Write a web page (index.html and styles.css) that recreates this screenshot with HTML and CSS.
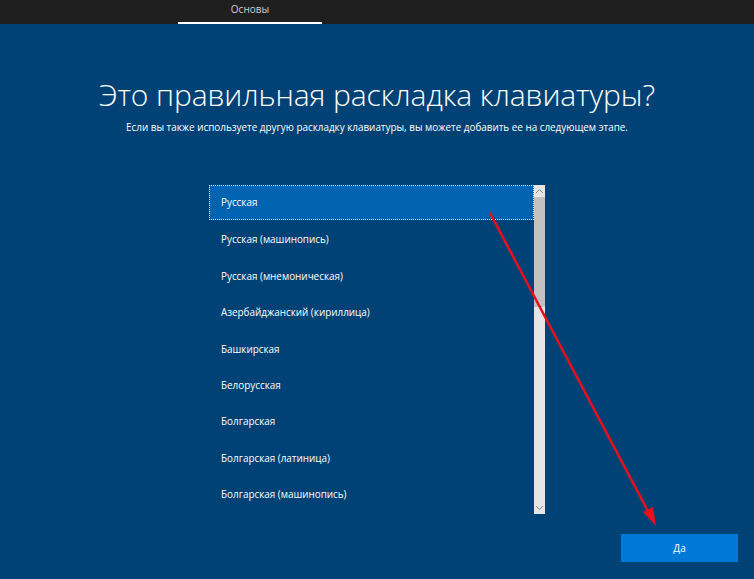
FILE: index.html
```html
<!DOCTYPE html>
<html lang="ru">
<head>
    <meta charset="UTF-8">
    <title>Основы</title>
    <link rel="stylesheet" href="styles.css">
</head>
<body>
    <!-- Top bar with steps -->
    <div class="topbar">
        <div class="tab active">Основы</div>
    </div>

    <div class="page">
        <h1>Это правильная раскладка клавиатуры?</h1>
        <p class="hint">Если вы также используете другую раскладку клавиатуры, вы можете добавить ее на следующем этапе.</p>

        <div class="layoutList">
            <div class="items">
                <div class="item selected">Русская</div>
                <div class="item">Русская (машинопись)</div>
                <div class="item">Русская (мнемоническая)</div>
                <div class="item">Азербайджанский (кириллица)</div>
                <div class="item">Башкирская</div>
                <div class="item">Белорусская</div>
                <div class="item">Болгарская</div>
                <div class="item">Болгарская (латиница)</div>
                <div class="item">Болгарская (машинопись)</div>
            </div>
            <div class="scrollbar">
                <div class="arrow up">
                    <svg width="9" height="6" viewBox="0 0 9 6"><path d="M1 5 L4.5 1.5 L8 5" fill="none" stroke="#8a8a8a" stroke-width="1"/></svg>
                </div>
                <div class="thumb"></div>
                <div class="track"></div>
                <div class="arrow down">
                    <svg width="9" height="6" viewBox="0 0 9 6"><path d="M1 1 L4.5 4.5 L8 1" fill="none" stroke="#8a8a8a" stroke-width="1"/></svg>
                </div>
            </div>
        </div>
    </div>

    <div class="footer">
        <div class="button">Да</div>
    </div>

    <!-- red annotation arrow -->
    <svg class="annotation" width="754" height="579" viewBox="0 0 754 579">
        <line x1="490" y1="213" x2="649" y2="513" stroke="#e8101c" stroke-width="2.5" stroke-linecap="round"/>
        <polygon points="656,526 643,512 653,507" fill="#e8101c"/>
    </svg>
</body>
</html>
```

FILE: styles.css
```css
body, html {
    margin: 0;
    padding: 0;
    width: 100%;
    height: 100%;
    background-color: #004275; /* OOBE blue */
    color: #ffffff;
    font-family: "Open Sans", "Noto Sans", sans-serif;
    overflow: hidden;
}

body {
    display: flex;
    flex-direction: column;
    position: relative;
}

.topbar {
    height: 24px;
    background-color: #1f1f1f;
    display: flex;
    padding-left: 178px;
}

.tab {
    width: 144px;
    text-align: center;
    font-size: 10px;
    line-height: 18px;
    color: #cfcfcf;
    box-sizing: border-box;
}

.tab.active {
    border-bottom: 2px solid #ffffff;
    height: 24px;
}

.page {
    flex: 1;
    display: flex;
    flex-direction: column;
    align-items: center;
}

h1 {
    font-weight: 300;
    font-size: 30px;
    line-height: 36px;
    margin: 53px 0 0 0;
    letter-spacing: -0.1px;
}

.hint {
    font-size: 9.9px;
    line-height: 14px;
    margin: 7px 0 0 0;
}

.layoutList {
    margin-top: 51px;
    width: 336px;
    height: 329px;
    display: flex;
}

.items {
    width: 325px;
}

.item {
    height: 36.4px;
    line-height: 36.4px;
    padding-left: 12px;
    font-size: 9.9px;
    box-sizing: border-box;
}

.item.selected {
    background-color: #0063b1;
    outline: 1px dotted #ffffff;
    outline-offset: -1px;
    height: 35px;
    line-height: 35px;
    margin-bottom: 1.4px;
}

.scrollbar {
    width: 11px;
    display: flex;
    flex-direction: column;
    background-color: #e6e6e6;
}

.arrow {
    height: 12px;
    display: flex;
    justify-content: center;
    align-items: center;
}

.thumb {
    height: 110px;
    background-color: #c2c2c2;
}

.track {
    flex: 1;
}

.footer {
    display: flex;
    justify-content: flex-end;
    padding: 0 16px 17px 0;
}

.button {
    width: 117px;
    height: 28px;
    line-height: 28px;
    background-color: #0078d7;
    text-align: center;
    font-size: 10px;
}

.annotation {
    position: absolute;
    top: 0;
    left: 0;
    pointer-events: none;
}
```
